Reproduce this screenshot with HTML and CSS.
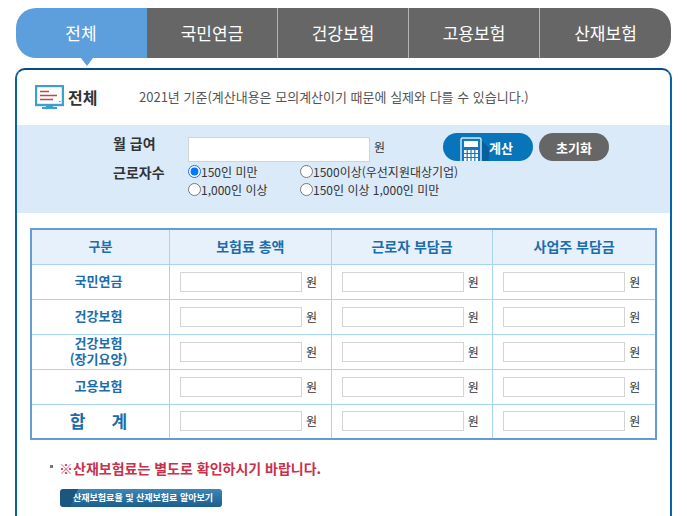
FILE: index.html
```html
<!DOCTYPE html>
<html lang="ko">
<head>
  <meta charset="UTF-8" />
  <meta name="viewport" content="width=device-width, initial-scale=1.0"/>
  <title>4대보험 모의계산</title>
  <link rel="stylesheet" href="styles.css">
</head>
<body>

  <nav class="tabs">
    <a class="active" href="#all">전체</a>
    <a href="#pension">국민연금</a>
    <a href="#health">건강보험</a>
    <a href="#employ">고용보험</a>
    <a href="#accident">산재보험</a>
  </nav>

  <div class="panel">
    <div class="panel-head">
      <h2>
        <svg width="29" height="24" viewBox="0 0 29 24">
          <rect x="1" y="1" width="27" height="19" fill="#fff" stroke="#3b9fd0" stroke-width="2.4"/>
          <path d="M5 6.5h9M5 10.5h17M5 14.5h13" stroke="#c8434c" stroke-width="1.4"/>
          <path d="M24 16.5h1.5" stroke="#3b9fd0"/>
          <path d="M11 20h7v2h4v2H7v-2h4z" fill="#3b9fd0"/>
        </svg>
        전체
      </h2>
      <p>2021년 기준(계산내용은 모의계산이기 때문에 실제와 다를 수 있습니다.)</p>
    </div>

    <form class="calc-form">
      <div class="form-row">
        <label class="form-label" for="salary">월 급여</label>
        <input class="salary" type="text" id="salary">
        <span class="won">원</span>
        <div class="buttons">
          <button class="btn-calc" type="button">
            <svg width="29" height="24" viewBox="0 0 29 24">
              <path d="M21 3l8 8v13h-8z" fill="#075f9e"/>
              <path d="M1 24V2.5Q1 1 2.5 1h17Q21 1 21 2.5V24" fill="#1379bf" stroke="#d8eaf7" stroke-width="1.4"/>
              <rect x="4" y="4" width="14" height="6" fill="#fff"/>
              <path d="M4 14.5h14M4 18.5h14M4 22.5h14" stroke="#fff" stroke-width="3" stroke-dasharray="2.6 1.2"/>
            </svg>
            계산
          </button>
          <button class="btn-reset" type="reset">초기화</button>
        </div>
      </div>
      <div class="form-row">
        <span class="form-label" id="workers">근로자수</span>
        <div class="radios" role="radiogroup" aria-labelledby="workers">
          <label><input type="radio" name="workers" checked>150인 미만</label>
          <label><input type="radio" name="workers">1500이상(우선지원대상기업)</label>
          <label><input type="radio" name="workers">1,000인 이상</label>
          <label><input type="radio" name="workers">150인 이상 1,000인 미만</label>
        </div>
      </div>
    </form>

    <div class="result">
      <table>
        <thead>
          <tr>
            <th class="first">구분</th>
            <th>보험료 총액</th>
            <th>근로자 부담금</th>
            <th>사업주 부담금</th>
          </tr>
        </thead>
        <tbody>
          <tr>
            <th>국민연금</th>
            <td><label><input type="text">원</label></td>
            <td><label><input type="text">원</label></td>
            <td><label><input type="text">원</label></td>
          </tr>
          <tr>
            <th>건강보험</th>
            <td><label><input type="text">원</label></td>
            <td><label><input type="text">원</label></td>
            <td><label><input type="text">원</label></td>
          </tr>
          <tr>
            <th>건강보험<br>(장기요양)</th>
            <td><label><input type="text">원</label></td>
            <td><label><input type="text">원</label></td>
            <td><label><input type="text">원</label></td>
          </tr>
          <tr>
            <th>고용보험</th>
            <td><label><input type="text">원</label></td>
            <td><label><input type="text">원</label></td>
            <td><label><input type="text">원</label></td>
          </tr>
          <tr class="total">
            <th><span>합</span><span>계</span></th>
            <td><label><input type="text">원</label></td>
            <td><label><input type="text">원</label></td>
            <td><label><input type="text">원</label></td>
          </tr>
        </tbody>
      </table>
    </div>

    <div class="notice">
      <p>※산재보험료는 별도로 확인하시기 바랍니다.</p>
      <a class="more" href="#rate">산재보험료율 및 산재보험료 알아보기</a>
    </div>
  </div>

</body>
</html>
```
FILE: styles.css
```css
* {
  margin: 0;
  padding: 0;
  box-sizing: border-box;
}

body {
  background-color: #fff;
  color: #333;
  padding: 8px 15px 0;
  font-family: "Noto Sans CJK KR", sans-serif;
  font-size: 12px;
}

input, button {
  font-family: inherit;
}

/* tabs */
.tabs {
  display: flex;
  margin: 0 1px 10px;
}

.tabs a {
  position: relative;
  width: 20%;
  height: 50px;
  line-height: 50px;
  text-align: center;
  font-size: 17px;
  color: #fff;
  text-decoration: none;
  background-color: #666;
  border-right: 1px solid #b4b4b4;
}

.tabs a.active {
  background-color: #5c9fdc;
  border-color: #5c9fdc;
  border-radius: 20px 0 0 20px;
}

.tabs a:last-child {
  border-right: none;
  border-radius: 0 20px 20px 0;
}

.tabs a.active::after {
  content: "";
  position: absolute;
  left: 50%;
  top: 100%;
  border: 6px solid transparent;
  border-top: 8px solid #5c9fdc;
  border-bottom: none;
}

/* panel */
.panel {
  border: 2px solid #0865a5;
  border-top-color: #064a86;
  border-bottom: none;
  border-radius: 10px 10px 0 0;
  padding-bottom: 9px;
}

.panel-head {
  display: flex;
  align-items: center;
  height: 55px;
  padding: 0 0 2px 18px;
}

.panel-head h2 {
  display: flex;
  align-items: center;
  gap: 4px;
  width: 104px;
  font-size: 16px;
}

.panel-head p {
  font-size: 13px;
  color: #555;
}

/* form */
.calc-form {
  background-color: #dbeaf9;
  padding: 8px 16px 15px 96px;
}

.form-row {
  display: flex;
  align-items: flex-start;
}

.form-label {
  width: 75px;
  height: 18px;
  line-height: 20px;
  font-size: 14px;
  font-weight: bold;
}

.salary {
  width: 182px;
  height: 25px;
  margin-top: 4px;
  border: 1px solid #d4d4d4;
  background-color: #fff;
}

.won {
  margin-left: 4px;
  line-height: 28px;
}

.buttons {
  display: flex;
  gap: 6px;
  margin-left: 58px;
}

.buttons button {
  height: 28px;
  border: none;
  border-radius: 14px;
  color: #fff;
  font-size: 13px;
  font-weight: bold;
  cursor: pointer;
}

.btn-calc {
  display: flex;
  align-items: center;
  width: 90px;
  padding-left: 17px;
  background-color: #0875bb;
}

.btn-calc svg {
  align-self: flex-end;
}

.btn-reset {
  width: 70px;
  background-color: #666;
}

.radios {
  display: grid;
  grid-template-columns: 112px auto;
}

.radios label {
  display: flex;
  align-items: center;
  height: 18px;
}

.radios input {
  width: 13px;
  height: 13px;
}

/* result table */
.result {
  padding: 15px 13px 0;
}

table {
  width: 100%;
  table-layout: fixed;
  border: 2px solid #649dd6;
  border-spacing: 0;
}

th, td {
  height: 35px;
  border-right: 1px solid #a6d5ef;
  border-bottom: 1px solid #a6d5ef;
}

tr > :last-child {
  border-right: none;
}

th {
  padding: 0 4px 2px 0;
  color: #1c6dae;
  font-size: 13px;
  line-height: 16px;
}

thead th {
  padding-right: 0;
  background-color: #e6f1fb;
  font-size: 14px;
}

th.first {
  width: 138px;
  font-size: 13px;
}

td {
  padding: 0 0 1px 10px;
}

td label {
  display: flex;
  align-items: center;
  gap: 4px;
  line-height: 18px;
}

td input {
  width: 122px;
  height: 20px;
  border: 1px solid #d4d4d4;
}

.total th, .total td {
  height: 33px;
  border-bottom: none;
}

.total th {
  font-size: 17px;
}

.total span + span {
  margin-left: 26px;
}

/* notice */
.notice {
  display: flex;
  flex-direction: column;
  align-items: flex-start;
  gap: 11px;
  padding: 18px 0 0 33px;
}

.notice p {
  display: flex;
  align-items: center;
  gap: 6px;
  color: #c9304a;
  font-size: 14px;
  font-weight: bold;
  line-height: 20px;
}

.notice p::before {
  content: "";
  width: 3px;
  height: 3px;
  margin-bottom: 4px;
  background-color: #777;
}

.more {
  margin-left: 10px;
  padding: 0 9px 0 13px;
  border-radius: 3px;
  background: linear-gradient(115deg, #1b567f 16px, transparent 17px), linear-gradient(#3c86b5, #1b5e8e);
  color: #fff;
  font-size: 9px;
  font-weight: bold;
  line-height: 18px;
  text-decoration: none;
}
```
